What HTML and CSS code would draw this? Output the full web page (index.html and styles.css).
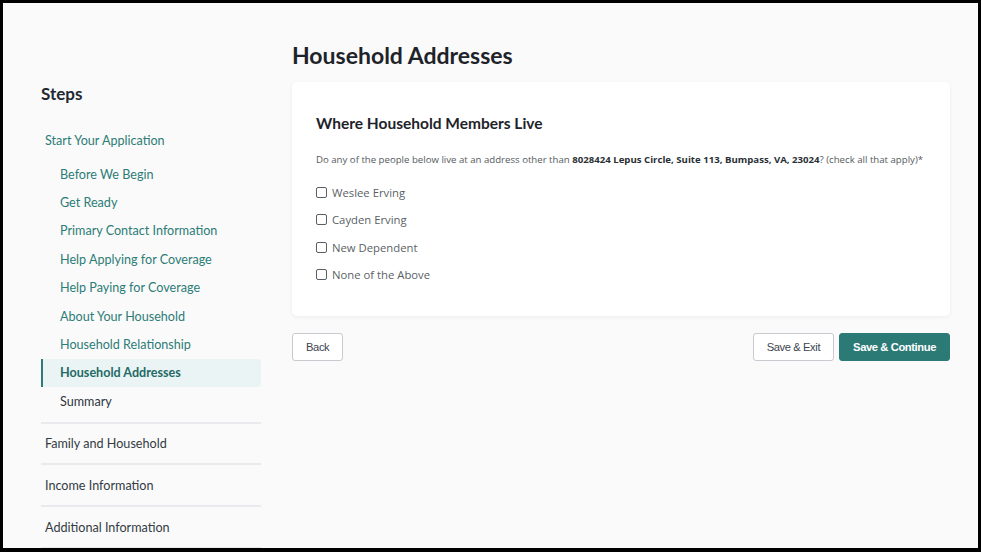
FILE: index.html
```html
<!DOCTYPE html>
<html lang="en">
<head>
<meta charset="utf-8">
<title>Household Addresses</title>
<link rel="stylesheet" href="styles.css">
</head>
<body>
<div class="frame">
  <div class="layout">
    <aside class="sidebar">
      <h2 class="steps-title">Steps</h2>
      <div class="section section-open">
        <div class="section-title active-section">Start Your Application</div>
        <ul class="substeps">
          <li class="substep">Before We Begin</li>
          <li class="substep">Get Ready</li>
          <li class="substep">Primary Contact Information</li>
          <li class="substep">Help Applying for Coverage</li>
          <li class="substep">Help Paying for Coverage</li>
          <li class="substep">About Your Household</li>
          <li class="substep">Household Relationship</li>
          <li class="substep current">Household Addresses</li>
          <li class="substep upcoming">Summary</li>
        </ul>
      </div>
      <div class="section"><div class="section-title">Family and Household</div></div>
      <div class="section"><div class="section-title">Income Information</div></div>
      <div class="section"><div class="section-title">Additional Information</div></div>
    </aside>
    <main class="main">
      <h1 class="page-title">Household Addresses</h1>
      <section class="card">
        <h3 class="card-title">Where Household Members Live</h3>
        <p class="question">Do any of the people below live at an address other than <strong>8028424 Lepus Circle, Suite 113, Bumpass, VA, 23024</strong>? (check all that apply)*</p>
        <div class="options">
          <label class="option"><span class="box"></span>Weslee Erving</label>
          <label class="option"><span class="box"></span>Cayden Erving</label>
          <label class="option"><span class="box"></span>New Dependent</label>
          <label class="option"><span class="box"></span>None of the Above</label>
        </div>
      </section>
      <div class="actions">
        <button class="btn">Back</button>
        <div class="actions-right">
          <button class="btn">Save &amp; Exit</button>
          <button class="btn btn-primary">Save &amp; Continue</button>
        </div>
      </div>
    </main>
  </div>
</div>
</body>
</html>
```
FILE: styles.css
```css
html, body {
  margin: 0;
  padding: 0;
  background: #000;
}
body {
  width: 981px;
  height: 552px;
  overflow: hidden;
}
.frame {
  margin: 3px 3px 0 3px;
  height: 545px;
  background: #fafafa;
  overflow: hidden;
}
.layout {
  display: flex;
  gap: 31px;
  padding: 0 28px 0 38px;
}
.sidebar {
  width: 220px;
  flex: none;
  padding-top: 80px;
  font-family: Lato, "Liberation Sans", sans-serif;
}
.steps-title {
  margin: 0 0 25px 0;
  font-size: 17px;
  font-weight: 700;
  color: #222831;
  line-height: 22px;
}
.section {
  border-bottom: 2px solid #e9e9ee;
}
.section-title {
  padding: 0 4px;
  height: 39.8px;
  display: flex;
  align-items: center;
  font-size: 12.6px;
  color: #333a44;
}
.section-open .section-title {
  height: 20px;
  margin-bottom: 10px;
}
.active-section { color: #2c7c77; }
.substeps {
  list-style: none;
  margin: 0;
  padding: 0 0 6px 0;
}
.substep {
  height: 28.4px;
  display: flex;
  align-items: center;
  padding-left: 19px;
  font-size: 12.6px;
  color: #2c7c77;
}
.substep.current {
  background: #eaf4f4;
  border-left: 2px solid #2c7c77;
  padding-left: 17px;
  border-radius: 0 4px 4px 0;
  font-weight: 700;
  color: #236a66;
}
.substep.upcoming { color: #2f3640; }
.main {
  flex: 1;
  min-width: 0;
}
.page-title {
  margin: 37px 0 0 0;
  height: 42px;
  font-family: Lato, "Liberation Sans", sans-serif;
  font-size: 23px;
  font-weight: 700;
  line-height: 30px;
  color: #1e2329;
}
.card {
  background: #fff;
  border-radius: 5px;
  box-shadow: 0 1px 4px rgba(0,0,0,0.06);
  padding: 30px 24px 0 24px;
  height: 234px;
  box-sizing: border-box;
}
.card-title {
  margin: 0;
  font-family: Lato, "Liberation Sans", sans-serif;
  font-size: 15.5px;
  font-weight: 700;
  line-height: 22px;
  color: #1e2329;
}
.question {
  margin: 19px 0 12px 0;
  font-family: "Open Sans", "Noto Sans", sans-serif;
  font-size: 9.65px;
  line-height: 14px;
  color: #555a60;
}
.question strong { color: #2a2f35; font-weight: 700; }
.options {
  display: flex;
  flex-direction: column;
}
.option {
  display: flex;
  align-items: center;
  gap: 5px;
  height: 27.3px;
  font-family: "Open Sans", "Noto Sans", sans-serif;
  font-size: 11.3px;
  color: #5a5f66;
}
.box {
  width: 9px;
  height: 9px;
  border: 1.6px solid #5a5f66;
  border-radius: 2px;
  flex: none;
}
.actions {
  display: flex;
  justify-content: space-between;
  margin-top: 17px;
}
.actions-right {
  display: flex;
  gap: 5px;
}
.btn {
  height: 28px;
  padding: 0 13px;
  background: #fff;
  border: 1px solid #c9c9cf;
  border-radius: 3px;
  font-family: "Liberation Sans", Arial, sans-serif;
  font-size: 11.2px;
  letter-spacing: -0.4px;
  color: #3d4450;
}
.btn-primary {
  background: #2c7a76;
  border-color: #2c7a76;
  color: #fff;
  font-weight: 700;
}
```
